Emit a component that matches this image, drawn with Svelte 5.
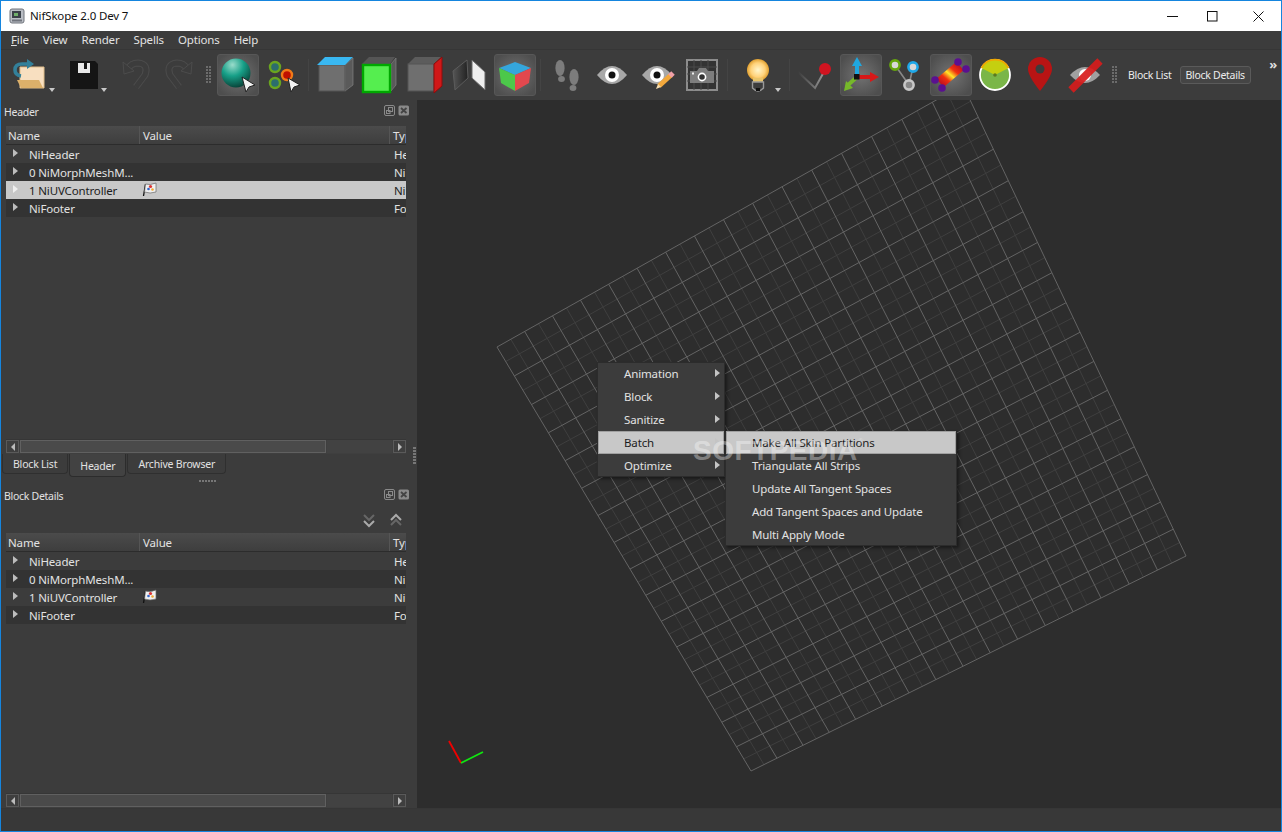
<script>
    const menus = ['File', 'View', 'Render', 'Spells', 'Options', 'Help'];
    const rows = [
        { name: 'NiHeader', type: 'Header' },
        { name: '0 NiMorphMeshM...', type: 'NiMorphMeshModifier' },
        { name: '1 NiUVController', type: 'NiUVController', flag: true },
        { name: 'NiFooter', type: 'Footer' }
    ];
    const rootItems = ['Animation', 'Block', 'Sanitize', 'Batch', 'Optimize'];
    const batchItems = ['Make All Skin Partitions', 'Triangulate All Strips', 'Update All Tangent Spaces', 'Add Tangent Spaces and Update', 'Multi Apply Mode'];

    // the floor grid is a flat quad seen in perspective, so map the unit square onto its corners
    const p00 = [497, 347], p10 = [963, 85], p11 = [1186, 556], p01 = [751, 771];
    function homography() {
        const dx1 = p10[0] - p11[0], dx2 = p01[0] - p11[0], sx = p00[0] - p10[0] + p11[0] - p01[0];
        const dy1 = p10[1] - p11[1], dy2 = p01[1] - p11[1], sy = p00[1] - p10[1] + p11[1] - p01[1];
        const d = dx1 * dy2 - dx2 * dy1;
        const g = (sx * dy2 - dx2 * sy) / d, h = (dx1 * sy - sx * dy1) / d;
        const a = p10[0] - p00[0] + g * p10[0], b = p01[0] - p00[0] + h * p01[0], c = p00[0];
        const e = p10[1] - p00[1] + g * p10[1], f = p01[1] - p00[1] + h * p01[1], i = p00[1];
        return (u, v) => {
            const w = g * u + h * v + 1;
            return [(a * u + b * v + c) / w, (e * u + f * v + i) / w];
        };
    }
    const map = homography();
    const gridLines = [];
    for (let i = 0; i <= 32; i++) {
        const t = i / 32;
        gridLines.push({ from: map(t, 0), to: map(t, 1), major: i % 2 === 0 });
        gridLines.push({ from: map(0, t), to: map(1, t), major: i % 2 === 0 });
    }
    // minor lines first so the major ones stay on top
    gridLines.sort((a, b) => a.major - b.major);
</script>

{#snippet tree(selected)}
    <div class="tree">
        <div class="tree-head">
            <span>Name</span>
            <span>Value</span>
            <span>Type</span>
        </div>
        {#each rows as row, i}
            <div class="tree-row" class:alt={i % 2 === 1} class:selected={selected && row.flag}>
                <span class="name"><i class="arrow"></i>{row.name}</span>
                <span class="value">
                    {#if row.flag}
                        <svg width="15" height="15" viewBox="0 0 15 15">
                            <path d="M1.500 14 L3.500 2" stroke="#111" stroke-width="1.300" />
                            <path d="M3.500 2 Q8 3.500 14 1 L14 10 Q8 12 2.500 10 Z" fill="#f0f0f0" stroke="#666" stroke-width=".7" />
                            <circle cx="8.500" cy="4.500" r="1.600" fill="#d33" />
                            <circle cx="6.500" cy="7" r="1.300" fill="#36c" />
                            <circle cx="10.500" cy="7.500" r="1.300" fill="#ea3" />
                        </svg>
                    {/if}
                </span>
                <span class="type">{row.type}</span>
            </div>
        {/each}
    </div>
{/snippet}

{#snippet dockTitle(text)}
    <div class="dock-title">
        <span>{text}</span>
        <svg width="26" height="12" viewBox="0 0 26 12">
            <rect x=".5" y=".5" width="10" height="10" rx="1.500" fill="none" stroke="#8a8a8a" />
            <rect x="4.500" y="2.500" width="4" height="4" fill="none" stroke="#8a8a8a" />
            <rect x="2.500" y="5.500" width="3.500" height="3" fill="none" stroke="#8a8a8a" />
            <rect x="14.500" y=".5" width="10.500" height="10" rx="1.500" fill="#8a8a8a" />
            <path d="M17 3 L22.500 8 M22.500 3 L17 8" stroke="#444" stroke-width="1.800" />
        </svg>
    </div>
{/snippet}

{#snippet scrollbar()}
    <div class="scrollbar">
        <div class="sb-btn"><i class="sb-left"></i></div>
        <div class="sb-thumb"></div>
        <div class="sb-track"></div>
        <div class="sb-btn"><i class="sb-right"></i></div>
    </div>
{/snippet}

{#snippet caret()}
    <i class="caret"></i>
{/snippet}

{#snippet grip()}
    <div class="grip-wrap"><div class="grip"></div></div>
{/snippet}

<div class="window">
    <div class="titlebar">
        <svg class="app-icon" width="16" height="16" viewBox="0 0 16 16">
            <rect x="1" y="1" width="14" height="14" rx="2" fill="#b9bdc4" stroke="#70747c" />
            <rect x="3" y="3" width="9" height="7" fill="#3a4048" />
            <rect x="5" y="5" width="4" height="3" fill="#6fae6a" />
            <rect x="3" y="11.500" width="10" height="2" fill="#70747c" />
        </svg>
        <span class="app-title">NifSkope 2.0 Dev 7</span>
        <div class="win-buttons">
            <svg width="11" height="11" viewBox="0 0 11 11"><path d="M0 5.500H11" stroke="#111" /></svg>
            <svg width="11" height="11" viewBox="0 0 11 11"><rect x=".5" y=".5" width="9.500" height="9.500" fill="none" stroke="#111" /></svg>
            <svg width="11" height="11" viewBox="0 0 11 11"><path d="M.5 .5L10.500 10.500M10.500 .5L.5 10.500" stroke="#111" /></svg>
        </div>
    </div>

    <div class="menubar">
        {#each menus as m, i}
            <span>{#if i === 0}<u>F</u>ile{:else}{m}{/if}</span>
        {/each}
    </div>

    <div class="toolbar">
        <div class="tool wide">
            <svg width="42" height="42" viewBox="0 0 42 42">
                <path d="M13 13H37V34H13Z" fill="#f8dfc0" stroke="#e0bd8a" />
                <path d="M10 26H32L36 34H14Z" fill="#dcb06a" />
                <path d="M22 10 H15 Q8 10 8 16 Q8 21 14 22" fill="none" stroke="#33809a" stroke-width="3.600" />
                <path d="M20 5 L27 10 L20 15Z" fill="#33809a" />
            </svg>
            {@render caret()}
        </div>
        <div class="tool save">
            <svg width="42" height="42" viewBox="0 0 42 42">
                <path d="M7 7H32L35 10V35H7Z" fill="#151515" />
                <rect x="15" y="9" width="12" height="10" fill="#e8e8e8" />
                <rect x="21" y="9" width="3" height="6" fill="#151515" />
            </svg>
            {@render caret()}
        </div>
        <div class="tool">
            <svg width="42" height="42" viewBox="0 0 42 42">
                <g fill="none" stroke-linejoin="round">
                    <path d="M22 33 L31 21 Q35 10 24 9 Q17 9 14 15" stroke="#4c4c4c" stroke-width="7" />
                    <path d="M22 33 L31 21 Q35 10 24 9 Q17 9 14 15" stroke="#3c3c3c" stroke-width="5" />
                </g>
                <path d="M9 8 L10 20 L20 17Z" fill="#3c3c3c" stroke="#4c4c4c" />
            </svg>
        </div>
        <div class="tool">
            <svg width="42" height="42" viewBox="0 0 42 42">
                <g fill="none" stroke-linejoin="round">
                    <path d="M20 33 L11 21 Q7 10 18 9 Q25 9 28 15" stroke="#4c4c4c" stroke-width="7" />
                    <path d="M20 33 L11 21 Q7 10 18 9 Q25 9 28 15" stroke="#3c3c3c" stroke-width="5" />
                </g>
                <path d="M33 8 L32 20 L22 17Z" fill="#3c3c3c" stroke="#4c4c4c" />
            </svg>
        </div>
        {@render grip()}
        <div class="tool checked">
            <svg width="42" height="42" viewBox="0 0 42 42">
                <defs>
                    <radialGradient id="ball" cx=".38" cy=".22" r=".85">
                        <stop offset="0" stop-color="#9adccb" />
                        <stop offset=".45" stop-color="#17a088" />
                        <stop offset="1" stop-color="#07382f" />
                    </radialGradient>
                </defs>
                <circle cx="19" cy="19" r="14.500" fill="url(#ball)" />
                <path d="M25 23 L38 31 L32 33 L29 38Z" fill="#f2f2f2" stroke="#222" />
            </svg>
        </div>
        <div class="tool">
            <svg width="42" height="42" viewBox="0 0 42 42">
                <g stroke-width="2.400">
                    <circle cx="13" cy="13" r="5" fill="#2c6d6d" stroke="#6aa51f" />
                    <circle cx="13" cy="29" r="5" fill="#2c6d6d" stroke="#6aa51f" />
                    <circle cx="25" cy="21" r="5" fill="#c01000" stroke="#f07a18" />
                </g>
                <path d="M26 24 L38 31 L32 33 L29 38Z" fill="#f2f2f2" stroke="#222" />
            </svg>
        </div>
        <div class="sep"></div>
        <div class="tool">
            <svg width="42" height="42" viewBox="0 0 42 42">
                <path d="M31 11 L39 4 V31 L31 37Z" fill="#5a5a5a" stroke="#8a8a8a" stroke-width=".6" />
                <rect x="5" y="11" width="26" height="26" fill="#6f6f6f" stroke="#555" />
                <path d="M3 11 L11 3 H39 L31 11Z" fill="#39b8f2" />
            </svg>
        </div>
        <div class="tool">
            <svg width="42" height="42" viewBox="0 0 42 42">
                <path d="M3 10 L10 3 H36 L31 10Z" fill="#555" />
                <path d="M32 10 L37 4 V31 L32 37Z" fill="#5a5a5a" stroke="#8a8a8a" stroke-width=".6" />
                <rect x="4" y="11" width="27" height="27" fill="#55ee4f" stroke="#00a800" stroke-width="2.400" />
            </svg>
        </div>
        <div class="tool">
            <svg width="42" height="42" viewBox="0 0 42 42">
                <path d="M4 10 L11 3 H37 L30 10Z" fill="#5c5c5c" />
                <rect x="4" y="10" width="26" height="27" fill="#6f6f6f" stroke="#555" />
                <path d="M30 10 L38 3 V32 L30 39Z" fill="#d01818" stroke="#8c0c0c" />
            </svg>
        </div>
        <div class="tool">
            <svg width="42" height="42" viewBox="0 0 42 42">
                <defs>
                    <linearGradient id="dark" x1="0" x2="1">
                        <stop offset="0" stop-color="#555" />
                        <stop offset="1" stop-color="#222" />
                    </linearGradient>
                </defs>
                <path d="M4 17 L18 6 L19 24 L6 36Z" fill="url(#dark)" stroke="#5c5c5c" />
                <path d="M23 6 L36 18 V36 L23 24Z" fill="#eee" stroke="#666" />
            </svg>
        </div>
        <div class="tool checked">
            <svg width="42" height="42" viewBox="0 0 42 42">
                <path d="M5 14 L21 8 L37 14 L21 21Z" fill="#35a6dc" />
                <path d="M5 14 L21 21 V37 L7 29Z" fill="#4cc84a" />
                <path d="M37 14 L21 21 V37 L35 29Z" fill="#e2484e" />
            </svg>
        </div>
        <div class="sep"></div>
        <div class="tool">
            <svg width="42" height="42" viewBox="0 0 42 42" fill="#7c7c7c">
                <ellipse cx="14" cy="14" rx="4.600" ry="8" />
                <ellipse cx="15.500" cy="25" rx="3.400" ry="3" />
                <ellipse cx="28" cy="23" rx="4.600" ry="8" />
                <ellipse cx="27" cy="34" rx="3.400" ry="3" />
            </svg>
        </div>
        <div class="tool">
            <svg width="42" height="42" viewBox="0 0 42 42">
                <path d="M6 21 Q21 3 36 21 Q21 39 6 21Z" fill="#a8a8a8" />
                <circle cx="21" cy="21" r="7" fill="#fff" />
                <circle cx="21" cy="21" r="3.500" fill="#111" />
            </svg>
        </div>
        <div class="tool">
            <svg width="42" height="42" viewBox="0 0 42 42">
                <path d="M6 21 Q21 3 36 21 Q21 39 6 21Z" fill="#a8a8a8" />
                <circle cx="21" cy="21" r="7" fill="#fff" />
                <circle cx="21" cy="21" r="3.500" fill="#111" />
                <path d="M23 32 L35 21" stroke="#f2a83c" stroke-width="5" />
                <path d="M34 22 L37 19" stroke="#f0a0a8" stroke-width="5" />
                <path d="M20 35 L22 30 L25 33Z" fill="#f6dcae" />
            </svg>
        </div>
        <div class="tool">
            <svg width="42" height="42" viewBox="0 0 42 42">
                <rect x="6" y="6" width="30" height="30" fill="#333" stroke="#8c8c8c" stroke-width="2" />
                <path d="M13 6V36M20 6V36M27 6V36M6 13H36M6 20H36M6 27H36" stroke="#4a4a4a" />
                <path d="M9 17H16L18 14H25L27 17H33V29H9Z" fill="#7d7d7d" />
                <circle cx="21" cy="23" r="3.600" fill="#333" stroke="#fff" stroke-width="1.600" />
                <rect x="11" y="18.500" width="2" height="2" fill="#eee" />
            </svg>
        </div>
        <div class="sep"></div>
        <div class="tool bulb">
            <svg width="42" height="42" viewBox="0 0 42 42">
                <defs>
                    <radialGradient id="glow">
                        <stop offset="0" stop-color="#fff6cc" />
                        <stop offset=".65" stop-color="#ffd27a" />
                        <stop offset="1" stop-color="#e0a030" />
                    </radialGradient>
                </defs>
                <circle cx="25" cy="16" r="11" fill="url(#glow)" />
                <path d="M20 24 H30 V28 H20Z" fill="#e8c46a" />
                <path d="M19.500 28 H30.500 V34 Q25 40 19.500 34Z" fill="#3c3c3c" stroke="#999" stroke-width="1.400" />
                <rect x="23" y="34" width="4" height="3" fill="#111" />
            </svg>
            {@render caret()}
        </div>
        <div class="sep"></div>
        <div class="tool">
            <svg width="42" height="42" viewBox="0 0 42 42">
                <defs>
                    <linearGradient id="tick" x1="0" x2="1">
                        <stop offset="0" stop-color="#3c3c3c" />
                        <stop offset="1" stop-color="#9a9a9a" />
                    </linearGradient>
                </defs>
                <path d="M3 18 L20 34 L30 16" fill="none" stroke="url(#tick)" stroke-width="2" />
                <circle cx="30" cy="15" r="6" fill="#d01420" />
            </svg>
        </div>
        <div class="tool checked">
            <svg width="42" height="42" viewBox="0 0 42 42">
                <path d="M17 23V10" stroke="#1ea7e0" stroke-width="4" />
                <path d="M12 12 L17 3 L22 12Z" fill="#1ea7e0" />
                <path d="M17 23H32" stroke="#d81818" stroke-width="4" />
                <path d="M30 18 L39 23 L30 28Z" fill="#d81818" />
                <path d="M17 23 L8 31" stroke="#76b82a" stroke-width="4" />
                <path d="M4 37 L6 27 L13 34Z" fill="#76b82a" />
                <rect x="14" y="20" width="5.500" height="5.500" fill="#111" />
            </svg>
        </div>
        <div class="tool">
            <svg width="42" height="42" viewBox="0 0 42 42">
                <path d="M10 11 L24 31 L28 13" fill="none" stroke="#888" stroke-width="1.600" />
                <circle cx="10" cy="11" r="4.600" fill="#d8d8d8" stroke="#66a60e" stroke-width="2.600" />
                <circle cx="28" cy="13" r="4.600" fill="#d8d8d8" stroke="#1ea7e8" stroke-width="2.600" />
                <circle cx="24" cy="31" r="4.600" fill="#888" stroke="#c8c8c8" stroke-width="2.600" />
            </svg>
        </div>
        <div class="tool checked">
            <svg width="42" height="42" viewBox="0 0 42 42">
                <defs>
                    <linearGradient id="heat" x1="0" y1="1" x2="1" y2="0">
                        <stop offset="0" stop-color="#c01020" />
                        <stop offset=".28" stop-color="#f03010" />
                        <stop offset=".5" stop-color="#ffe828" />
                        <stop offset=".72" stop-color="#f03010" />
                        <stop offset="1" stop-color="#c01020" />
                    </linearGradient>
                </defs>
                <path d="M10 29 L30 12" stroke="url(#heat)" stroke-width="11" />
                <g fill="#5a1090">
                    <circle cx="5" cy="26" r="3.800" />
                    <circle cx="12" cy="34" r="3.800" />
                    <circle cx="28" cy="8" r="3.800" />
                    <circle cx="36" cy="15" r="3.800" />
                </g>
            </svg>
        </div>
        <div class="tool">
            <svg width="42" height="42" viewBox="0 0 42 42">
                <circle cx="20" cy="21" r="15" fill="#7ab648" stroke="#fff" stroke-width="1.800" />
                <path d="M6.500 14 A15 15 0 0 1 33.500 14 L20 21Z" fill="#c5cf10" />
                <path d="M6.500 14 A15 15 0 0 1 33.500 14" fill="none" stroke="#f0a800" stroke-width="1.800" />
                <circle cx="20" cy="21" r="1.800" fill="#5c7a20" />
            </svg>
        </div>
        <div class="tool">
            <svg width="42" height="42" viewBox="0 0 42 42">
                <path d="M20 37 Q8 22 8 15 A12 12 0 0 1 32 15 Q32 22 20 37Z" fill="#b81414" />
                <circle cx="20" cy="15" r="4.500" fill="#3c3c3c" />
            </svg>
        </div>
        <div class="tool">
            <svg width="42" height="42" viewBox="0 0 42 42">
                <path d="M5 21 Q20 5 35 21 Q20 37 5 21Z" fill="#a0a0a0" />
                <circle cx="20" cy="21" r="6" fill="#fff" />
                <path d="M6 36 L35 7" stroke="#d81c1c" stroke-opacity=".92" stroke-width="7.500" />
            </svg>
        </div>
        {@render grip()}
        <span class="text-tool">Block List</span>
        <span class="text-tool on">Block Details</span>
        <span class="more">»</span>
    </div>

    <div class="main">
        <aside class="dock">
            {@render dockTitle('Header')}
            <div class="pane top">
                {@render tree(true)}
                {@render scrollbar()}
            </div>
            <div class="tabs">
                <span class="tab">Block List</span>
                <span class="tab current">Header</span>
                <span class="tab">Archive Browser</span>
            </div>
            <div class="splitter"><i></i></div>
            {@render dockTitle('Block Details')}
            <div class="expand-row">
                <svg width="40" height="18" viewBox="0 0 40 18" fill="none">
                    <path d="M1 3 L6 8 L11 3" stroke="#666" stroke-width="2" />
                    <path d="M1 9 L6 14 L11 9" stroke="#aaa" stroke-width="2" />
                    <path d="M28 8 L33 3 L38 8" stroke="#aaa" stroke-width="2" />
                    <path d="M28 13 L33 8 L38 13" stroke="#666" stroke-width="2" />
                </svg>
            </div>
            <div class="pane">
                {@render tree(false)}
                {@render scrollbar()}
            </div>
            <i class="side-grip"></i>
        </aside>

        <section class="viewport">
            <svg class="scene" width="864" height="708" viewBox="417 100 864 708">
                {#each gridLines as l}
                    <line x1={l.from[0]} y1={l.from[1]} x2={l.to[0]} y2={l.to[1]} stroke={l.major ? '#646464' : '#3f3f3f'} />
                {/each}
                <path d="M461 763 L449 741" stroke="#f00000" stroke-width="1.800" />
                <path d="M461 763 L483 752" stroke="#10e810" stroke-width="1.800" />
            </svg>

            <div class="menu root">
                {#each rootItems as item}
                    <div class="menu-item" class:hot={item === 'Batch'}>{item}<i class="submenu-arrow"></i></div>
                {/each}
            </div>
            <div class="menu sub">
                {#each batchItems as item, i}
                    <div class="menu-item" class:hot={i === 0}>{item}</div>
                {/each}
            </div>
            <div class="watermark">SOFTPEDIA<sup>®</sup></div>
        </section>
    </div>

    <div class="statusbar"></div>
</div>

<style>
    :global(body) { margin: 0; background: #3c3c3c; }
    * { box-sizing: border-box; }
    i { display: block; font-style: normal; }

    .window {
        width: 1282px;
        height: 832px;
        display: flex;
        flex-direction: column;
        border: 1px solid #1585de;
        background: #3c3c3c;
        color: #e2e2e2;
        font: 11.5px/16px "Noto Sans", "Liberation Sans", sans-serif;
        letter-spacing: -.15px;
        overflow: hidden;
    }

    .titlebar { height: 30px; flex: none; display: flex; align-items: center; background: #fff; color: #111; padding-left: 8px; }
    .app-title { margin-left: 5px; }
    .app-icon { margin-top: -1px; }
    .win-buttons { margin-left: auto; display: flex; gap: 29px; padding-right: 17px; }
    .win-buttons svg:nth-child(2) { margin-right: 6px; }

    .menubar { height: 19px; flex: none; display: flex; padding-left: 10px; gap: 14px; align-items: center; border-bottom: 1px solid #363636; }

    .toolbar { height: 50px; flex: none; display: flex; align-items: center; gap: 3px; padding-left: 6px; }
    .tool { position: relative; flex: none; width: 42px; height: 42px; border: 1px solid transparent; border-radius: 3px; }
    .tool svg { position: absolute; left: -1px; top: -1px; }
    .tool.wide { width: 53px; }
    .tool.save { width: 48px; }
    .tool.bulb { width: 52px; }
    .tool.checked { background: radial-gradient(circle, #737373 0%, #4e4e4e 85%); border-color: #575757; }
    .caret { position: absolute; right: 4px; bottom: 3px; border: 3px solid transparent; border-top: 4px solid #c8c8c8; border-bottom: 0; }
    .tool.save .caret { right: 3px; }
    .tool.bulb .caret { right: 3px; }
    .sep { flex: none; width: 4px; height: 32px; position: relative; }
    .sep::after { content: ""; position: absolute; left: 1px; top: 0; bottom: 0; width: 1px; background: #444; }
    .grip-wrap { flex: none; width: 10px; display: flex; justify-content: center; }
    .grip {
        width: 6px;
        height: 18px;
        background-image:
            repeating-linear-gradient(180deg, transparent 0 2px, #3c3c3c 2px 3px),
            repeating-linear-gradient(90deg, #6c6c6c 0 2px, #3c3c3c 2px 3px);
    }
    .text-tool { flex: none; padding: 0 4px; height: 18px; line-height: 17px; font-size: 10.5px; letter-spacing: -.28px; border: 1px solid transparent; border-radius: 3px; color: #ececec; }
    .text-tool.on { background: #454545; border-color: #5a5a5a; padding: 0 5px; }
    .more { margin-left: auto; margin-right: 4px; margin-top: -23px; font-size: 13px; font-weight: bold; color: #ddd; }

    .main { flex: 1; min-height: 0; display: flex; }
    .dock { position: relative; flex: none; width: 416px; display: flex; flex-direction: column; }
    .dock-title { height: 24px; flex: none; display: flex; align-items: center; justify-content: space-between; padding: 0 7px 0 3px; font-size: 10.5px; letter-spacing: -.28px; }
    .dock-title svg { margin-top: -2px; }
    .dock > .dock-title:first-child { margin-bottom: 2px; }
    .pane { flex: 1; min-height: 0; display: flex; flex-direction: column; width: 400px; margin-left: 5px; }
    .pane.top { flex: none; height: 328px; }
    .tree { flex: 1; min-height: 0; overflow: hidden; }
    .tree-head {
        height: 19px;
        display: grid;
        grid-template-columns: 134px 250px 16px;
        background: linear-gradient(#4b4b4b, #3e3e3e);
        border-bottom: 1px solid #2c2c2c;
        line-height: 19px;
        overflow: hidden;
    }
    .tree-head span { padding-left: 2px; border-right: 1px solid #555; white-space: nowrap; overflow: hidden; }
    .tree-head span:nth-child(2) { padding-left: 3px; }
    .tree-head span:last-child { border: 0; padding-left: 3px; }
    .tree-row { height: 18px; display: grid; grid-template-columns: 134px 250px 16px; line-height: 19px; overflow: hidden; }
    .tree-row.alt { background: #333; }
    .tree-row.selected { background: #c8c8c8; color: #1c1c1c; }
    .tree-row.selected .arrow { border-left-color: #efefef; }
    .name { display: flex; align-items: center; padding-left: 23px; position: relative; white-space: nowrap; }
    .arrow { position: absolute; left: 7px; top: 4px; border: 4.500px solid transparent; border-left: 5px solid #bdbdbd; border-right: 0; }
    .value { padding-left: 2px; }
    .value svg { display: block; margin-top: 1px; }
    .type { padding-left: 4px; white-space: nowrap; overflow: hidden; }

    .scrollbar { height: 15px; flex: none; display: flex; gap: 1px; padding-bottom: 1px; background: #3f3f3f; border-top: 1px solid #363636; }
    .sb-btn { width: 13px; flex: none; border: 1px solid #5a5a5a; display: flex; align-items: center; justify-content: center; }
    .sb-left { border: 4px solid transparent; border-right: 4px solid #bbb; border-left: 0; }
    .sb-right { border: 4px solid transparent; border-left: 4px solid #bbb; border-right: 0; }
    .sb-thumb { width: 306px; flex: none; background: #4a4a4a; border: 1px solid #606060; }
    .sb-track { flex: 1; background: #424242; }

    .tabs { height: 23px; flex: none; display: flex; padding-left: 1px; gap: 1px; align-items: flex-start; }
    .tab { height: 20px; padding: 0 10px; line-height: 21px; font-size: 10.5px; letter-spacing: -.2px; border: 1px solid #2f2f2f; border-top: 0; border-radius: 0 0 4px 4px; }
    .tab.current { height: 23px; line-height: 25px; background: #424242; border-color: #2c2c2c; }
    .splitter { height: 7px; flex: none; position: relative; }
    .splitter i { position: absolute; left: 198px; top: 3px; width: 17px; height: 2px; background: repeating-linear-gradient(90deg, #777 0 2px, transparent 2px 3px); }
    .expand-row { height: 25px; flex: none; display: flex; justify-content: flex-end; align-items: center; padding-right: 14px; }
    .side-grip { position: absolute; right: 1px; top: 347px; width: 3px; height: 17px; background: repeating-linear-gradient(180deg, #777 0 2px, transparent 2px 3px); }

    .viewport { position: relative; flex: 1; background: #2d2d2d; overflow: hidden; }
    .scene { position: absolute; left: 0; top: 0; }

    .menu { position: absolute; background: #3c3c3c; border: 1px solid #2c2c2c; box-shadow: 2px 2px 3px rgba(0, 0, 0, .45); }
    .menu.root { left: 180px; top: 262px; width: 128px; height: 115px; }
    .menu.sub { left: 308px; top: 331px; width: 232px; height: 115px; }
    .menu-item { position: relative; height: 23px; line-height: 24px; padding-left: 26px; white-space: nowrap; top: -1px; }
    .menu-item.hot { background: #c8c8c8; color: #1c1c1c; outline: 1px solid #a0a0a0; outline-offset: -1px; }
    .submenu-arrow { position: absolute; right: 4px; top: 7px; border: 4.500px solid transparent; border-left: 5px solid #c4c4c4; border-right: 0; }
    .watermark {
        position: absolute;
        left: 276px;
        top: 337px;
        font: bold 28px/28px "Liberation Sans", sans-serif;
        letter-spacing: .5px;
        color: rgba(255, 255, 255, .36);
        white-space: nowrap;
        pointer-events: none;
    }
    .watermark sup { font-size: 8px; vertical-align: 16px; line-height: 0; font-weight: normal; }

    .statusbar { height: 23px; flex: none; background: #383838; border-top: 1px solid #363636; }
</style>
